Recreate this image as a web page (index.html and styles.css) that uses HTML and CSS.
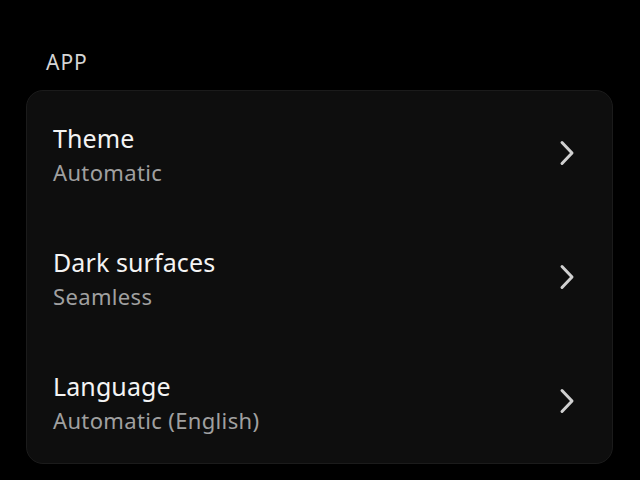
FILE: index.html
```html
<!DOCTYPE html>
<html lang="en">
<head>
<meta charset="utf-8">
<title>Settings</title>
<link rel="stylesheet" href="styles.css">
</head>
<body>
<main class="page">
  <h2 class="section-label">APP</h2>
  <div class="card">
    <div class="row">
      <div class="text">
        <div class="title">Theme</div>
        <div class="value">Automatic</div>
      </div>
      <svg class="chev" viewBox="0 0 16 26" width="16" height="26"><path d="M3 2.5 L13 13 L3 23.5" fill="none" stroke="#d0d0d0" stroke-width="3" stroke-linecap="round" stroke-linejoin="round"/></svg>
    </div>
    <div class="row">
      <div class="text">
        <div class="title">Dark surfaces</div>
        <div class="value">Seamless</div>
      </div>
      <svg class="chev" viewBox="0 0 16 26" width="16" height="26"><path d="M3 2.5 L13 13 L3 23.5" fill="none" stroke="#d0d0d0" stroke-width="3" stroke-linecap="round" stroke-linejoin="round"/></svg>
    </div>
    <div class="row">
      <div class="text">
        <div class="title">Language</div>
        <div class="value">Automatic (English)</div>
      </div>
      <svg class="chev" viewBox="0 0 16 26" width="16" height="26"><path d="M3 2.5 L13 13 L3 23.5" fill="none" stroke="#d0d0d0" stroke-width="3" stroke-linecap="round" stroke-linejoin="round"/></svg>
    </div>
  </div>
</main>
</body>
</html>
```

FILE: styles.css
```css
html, body {
  margin: 0;
  padding: 0;
  background: #000;
  height: 100%;
  overflow: hidden;
}
body {
  font-family: "Noto Sans", "DejaVu Sans", sans-serif;
  color: #f2f2f2;
}
.page {
  padding: 48px 27px 0 26px;
}
.section-label {
  margin: 0 0 14px 20px;
  font-size: 21px;
  font-weight: 400;
  line-height: 28px;
  color: #d4d4d4;
  letter-spacing: 1px;
}
.card {
  background: #0e0e0e;
  border: 1px solid #1b1b1b;
  border-radius: 17px;
  display: flex;
  flex-direction: column;
}
.row {
  height: 124px;
  display: flex;
  align-items: center;
  justify-content: space-between;
  padding: 0 37px 0 26px;
}
.text {
  display: flex;
  flex-direction: column;
  gap: 4px;
  padding-top: 2px;
}
.title {
  font-size: 25px;
  line-height: 32px;
  color: #f4f4f4;
  letter-spacing: 0.1px;
}
.value {
  font-size: 22px;
  line-height: 28px;
  color: #a0a0a0;
  letter-spacing: 0.35px;
}
.chev {
  display: block;
}
```
